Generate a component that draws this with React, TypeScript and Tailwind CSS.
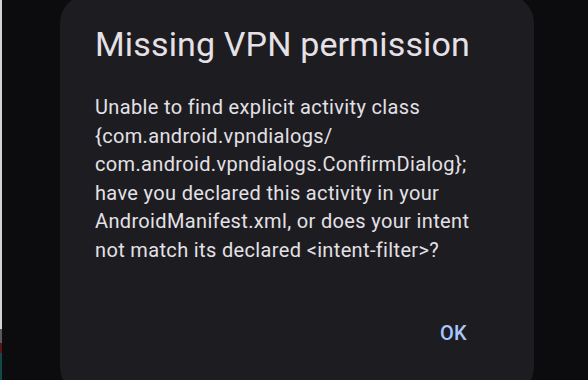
const App = () => {
    return (
        <div className="w-[588px] h-[380px] overflow-hidden flex bg-[#0c0c0e] font-['Roboto',sans-serif]">
            {/* edge of the window behind */}
            <div className="w-[2px] h-full flex flex-col">
                <div className="h-[329px] bg-[#d4d4d6]" />
                <div className="h-[14px] bg-[#5a5a5e]" />
                <div className="h-[10px] bg-[#5a1616]" />
                <div className="flex-1 bg-[#0f4a48]" />
            </div>

            {/* Dialog */}
            <div className="flex-1 pl-[58px]">
                <div className="w-[474px] h-[400px] -mt-[5px] rounded-[28px] bg-[#1d1c21] pl-[35px] pr-[24px] pt-[27px] flex flex-col">
                    <h1 className="text-[34px] leading-[44px] text-[#e6e1e6] tracking-[0.15px]">
                        Missing VPN permission
                    </h1>
                    <div className="mt-[27px] text-[20px] leading-[28.6px] text-[#e3e1e6] tracking-[0.35px] w-[382px]">
                        Unable to find explicit activity class {"{"}com.android.vpndialogs/ com.android.vpndialogs.ConfirmDialog{"}"}; have you declared this activity in your AndroidManifest.xml, or does your intent not match its declared &lt;intent-filter&gt;?
                    </div>
                    <div className="mt-[54px] flex justify-end pr-[43px]">
                        <button className="text-[20px] leading-[28px] font-medium text-[#a8c7fa] tracking-[0.3px]">OK</button>
                    </div>
                </div>
            </div>
        </div>
    );
};

export default App;
